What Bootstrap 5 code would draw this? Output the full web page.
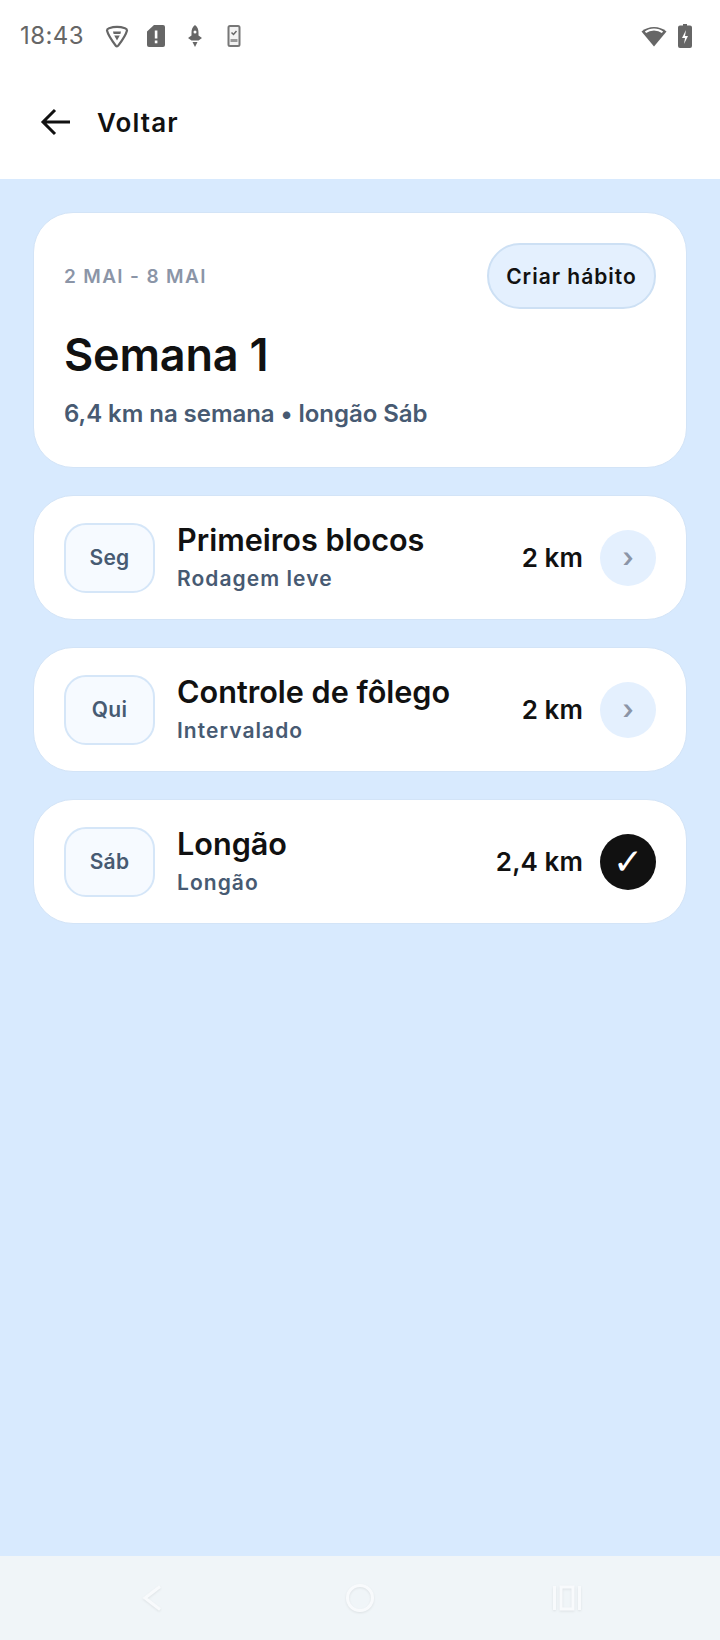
<!DOCTYPE html>
<html lang="pt">
<head>
<meta charset="UTF-8" />
<title>Semana 1</title>
<link href="https://cdn.jsdelivr.net/npm/bootstrap@5.3.3/dist/css/bootstrap.min.css" rel="stylesheet" />
<style>
  html, body { height: 100%; }
  body { font-family: Inter, "Liberation Sans", sans-serif; color: #111; background: #d8eafe; }
  .app-screen { height: 1640px; }
  .status-strip { height: 71px; padding: 0 28px 0 20px; color: #666; }
  .status-time { font-size: 24px; font-weight: 400; letter-spacing: .4px; color: #666; width: 85px; }
  .status-icons { gap: 15px; }
  .wifi-gap { gap: 11px; }
  .back-row { height: 108px; padding: 0 0 6px 40px; gap: 25px; }
  .back-label { font-size: 26px; font-weight: 600; letter-spacing: 1.1px; }
  .main-area { padding: 33px 33px 0; gap: 27px; background: #d8eafe; }
  .week-card { height: 256px; padding: 30px 30px 0; border: 1px solid #d3e4f7; border-radius: 40px; background: #fff; }
  .week-range { font-size: 19px; font-weight: 600; letter-spacing: 1.350px; color: #8b95a7; padding-top: 2px; }
  .create-pill { width: 169px; height: 66px; padding: 2px 0 0; font-size: 21px; font-weight: 600; letter-spacing: 1px; color: #111; background: #e4f0fe; border: 2px solid #cde0f4; border-radius: 33px; }
  .week-title { font-size: 45px; font-weight: 600; line-height: 1; margin: 23px 0 0; letter-spacing: -.2px; }
  .week-note { font-size: 24px; font-weight: 600; letter-spacing: -.05px; color: #475a72; margin: 23px 0 0; line-height: 1.2; }
  .day-card { height: 125px; padding: 0 30px; gap: 22px; border: 1px solid #d3e4f7; border-radius: 40px; background: #fff; }
  .day-tag { width: 91px; height: 70px; font-size: 21px; font-weight: 600; letter-spacing: .3px; color: #475a72; background: #f6faff; border: 2px solid #d5e6f8; border-radius: 22px; flex: none; }
  .day-text { padding-bottom: 2px; }
  .day-name { font-size: 30.600px; font-weight: 600; line-height: 38px; margin-bottom: 7px; }
  .day-kind { font-size: 21px; font-weight: 600; letter-spacing: 1.05px; line-height: 26px; color: #475a72; }
  .day-dist { font-size: 26px; font-weight: 600; letter-spacing: .1px; }
  .day-go { width: 56px; height: 56px; font-size: 27px; font-weight: 600; line-height: 1; color: #8b95a7; background: #e4f0fe; flex: none; margin-left: -5px; }
  .day-done { color: #fff; background: #111; font-size: 36px; font-weight: 700; font-family: "DejaVu Sans", sans-serif; }
  .nav-strip { height: 84px; padding-left: 138px; background: #f0f5f8; }
  .nav-glyph { filter: drop-shadow(0 1px 1px rgba(0,0,0,.08)); }
  .nav-home { margin-left: 178px; }
  .nav-recent { margin-left: 175px; }
</style>
</head>
<body>
<div class="app-screen d-flex flex-column">
  <div class="bg-white">
    <div class="status-strip d-flex align-items-center">
      <span class="status-time">18:43</span>
      <div class="status-icons d-flex align-items-center">
        <svg width="24" height="24" viewBox="0 0 24 24"><path d="M2 6.500C2 5 3 4.500 4 4.200 9 2.600 15 2.600 20 4.200 21 4.500 22 5 22 6.500 21 11 16 18 13.200 21.700 12.500 22.600 11.500 22.600 10.800 21.700 8 18 3 11 2 6.500Z" fill="none" stroke="#666" stroke-width="2.200"/><path d="M8 7.500h8l-.6 2.500H8.600zM9.200 11.500h5.600L12 16.500z" fill="#666"/></svg>
        <svg width="24" height="24" viewBox="0 0 20 24"><path d="M8 1h9a2 2 0 0 1 2 2v18a2 2 0 0 1-2 2H3a2 2 0 0 1-2-2V7.500z" fill="#666"/><rect x="8.800" y="6.500" width="2.600" height="8" fill="#fff"/><rect x="8.800" y="16.500" width="2.600" height="2.800" fill="#fff"/></svg>
        <svg width="24" height="24" viewBox="0 0 16 24"><path d="M8 1c2.500 1.800 3.500 4.500 3.500 7.500v3l3.500 2.500-3.500 2.500h-7L1 14l3.500-2.500v-3C4.500 5.500 5.500 2.800 8 1z" fill="#666"/><path d="M5.500 18h5L8 23z" fill="#666"/><circle cx="8" cy="8" r="1.500" fill="#fff"/></svg>
        <svg width="24" height="24" viewBox="0 0 16 24"><rect x="2.500" y="2" width="11" height="20" rx="1.500" fill="#f2f2f2" stroke="#777" stroke-width="2"/><path d="M5.500 8.500l2 2 3-3.500" fill="none" stroke="#666" stroke-width="1.500"/><rect x="4.500" y="15" width="7" height="3" fill="#999"/></svg>
      </div>
      <div class="wifi-gap d-flex align-items-center ms-auto">
        <svg width="26" height="22" viewBox="0 0 26 22"><path d="M0.500 6.500C7 .5 19 .5 25.500 6.500L13 21.500Z" fill="#666"/><path d="M4.500 7.300C9 3.500 17 3.500 21.500 7.300" fill="none" stroke="#fff" stroke-width="2"/></svg>
        <svg width="14" height="24" viewBox="0 0 14 24"><path d="M5 0h4v1.500h3a2 2 0 0 1 2 2V22a2 2 0 0 1-2 2H2a2 2 0 0 1-2-2V3.500a2 2 0 0 1 2-2h3z" fill="#666"/><path d="M8 6l-4 8h3l-1 6 4-8H7z" fill="#fff"/></svg>
      </div>
    </div>
    <div class="back-row d-flex align-items-center">
      <svg width="32" height="30" viewBox="0 0 32 30"><path d="M30 15H3M15 3 3 15l12 12" fill="none" stroke="#111" stroke-width="3"/></svg>
      <span class="back-label">Voltar</span>
    </div>
  </div>

  <div class="main-area flex-grow-1 d-flex flex-column">
    <div class="week-card">
      <div class="d-flex justify-content-between align-items-center">
        <span class="week-range">2 MAI - 8 MAI</span>
        <button type="button" class="btn create-pill">Criar hábito</button>
      </div>
      <h1 class="week-title">Semana 1</h1>
      <p class="week-note">6,4 km na semana • longão Sáb</p>
    </div>

    <div class="day-card d-flex align-items-center">
      <div class="day-tag d-flex align-items-center justify-content-center">Seg</div>
      <div class="day-text flex-grow-1">
        <div class="day-name">Primeiros blocos</div>
        <div class="day-kind">Rodagem leve</div>
      </div>
      <span class="day-dist">2 km</span>
      <div class="day-go rounded-circle d-flex align-items-center justify-content-center">›</div>
    </div>

    <div class="day-card d-flex align-items-center">
      <div class="day-tag d-flex align-items-center justify-content-center">Qui</div>
      <div class="day-text flex-grow-1">
        <div class="day-name">Controle de fôlego</div>
        <div class="day-kind">Intervalado</div>
      </div>
      <span class="day-dist">2 km</span>
      <div class="day-go rounded-circle d-flex align-items-center justify-content-center">›</div>
    </div>

    <div class="day-card d-flex align-items-center">
      <div class="day-tag d-flex align-items-center justify-content-center">Sáb</div>
      <div class="day-text flex-grow-1">
        <div class="day-name">Longão</div>
        <div class="day-kind">Longão</div>
      </div>
      <span class="day-dist">2,4 km</span>
      <div class="day-go day-done rounded-circle d-flex align-items-center justify-content-center">✓</div>
    </div>
  </div>

  <div class="nav-strip d-flex align-items-center">
    <svg class="nav-glyph" width="28" height="30" viewBox="0 0 28 30"><path d="M22 3.500 7 15l15 11.500" fill="none" stroke="#f8fafc" stroke-width="3"/></svg>
    <svg class="nav-glyph nav-home" width="32" height="32" viewBox="0 0 32 32"><circle cx="16" cy="16" r="12.500" fill="none" stroke="#f8fafc" stroke-width="3"/></svg>
    <svg class="nav-glyph nav-recent" width="32" height="30" viewBox="0 0 32 30"><path d="M3.500 3v24M28.500 3v24" stroke="#f8fafc" stroke-width="3"/><rect x="10" y="4" width="12" height="22" fill="none" stroke="#f8fafc" stroke-width="3"/></svg>
  </div>
</div>
<script src="https://cdn.jsdelivr.net/npm/bootstrap@5.3.3/dist/js/bootstrap.bundle.min.js"></script>
</body>
</html>
